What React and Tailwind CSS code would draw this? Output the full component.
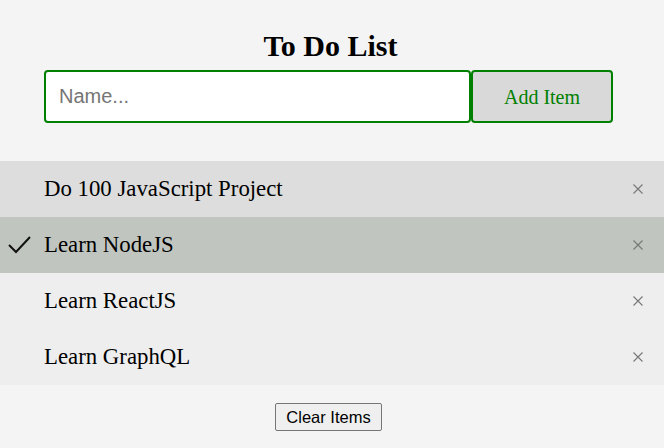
import { useState } from 'react';

const INITIAL = [
  { id: 1, text: 'Do 100 JavaScript Project', done: false },
  { id: 2, text: 'Learn NodeJS', done: true },
  { id: 3, text: 'Learn ReactJS', done: false },
  { id: 4, text: 'Learn GraphQL', done: false },
];

export default function App() {
  const [items, setItems] = useState(INITIAL);
  const [name, setName] = useState('');

  const add = () => {
    const t = name.trim();
    if (!t) return;
    setItems(list => [...list, { id: Date.now(), text: t, done: false }]);
    setName('');
  };

  const toggle = id => setItems(list => list.map(i => (i.id === id ? { ...i, done: !i.done } : i)));
  const remove = id => setItems(list => list.filter(i => i.id !== id));

  return (
    <div className="min-h-[448px] bg-[#f4f4f4] font-['Liberation_Serif',serif] text-black">
      <div className="pt-[30px] px-[44px] pb-[38px] bg-[#f4f4f4]">
        <h2 className="text-center text-[30px] leading-[32px] font-bold mb-[8px] pr-[3px]">To Do List</h2>
        <div className="flex">
          <input
            value={name}
            onChange={e => setName(e.target.value)}
            onKeyDown={e => { if (e.key === 'Enter') add(); }}
            placeholder="Name..."
            className="w-[427px] h-[53px] bg-white border-2 border-[#008000] rounded-[4px] px-[13px] text-[20px] font-['Liberation_Sans',sans-serif] outline-none placeholder:text-[#757575]"
          />
          <button
            onClick={add}
            className="w-[142px] h-[53px] bg-[#d9d9d9] border-2 border-[#008000] rounded-[4px] text-[20px] text-[#008000]"
          >
            Add Item
          </button>
        </div>
      </div>

      <ul>
        {items.map((item, idx) => (
          <li
            key={item.id}
            onClick={() => toggle(item.id)}
            className={`relative h-[56px] flex items-center pl-[44px] pr-[21px] text-[22.8px] cursor-pointer ${
              item.done ? 'bg-[#c0c6bf]' : idx === 0 ? 'bg-[#dddddd]' : 'bg-[#eeeeee]'
            }`}
          >
            {item.done && (
              <svg className="absolute left-[8px] top-[19px]" width="23" height="18" viewBox="0 0 23 18">
                <polyline points="1,9 8,16 22,1" fill="none" stroke="#111" strokeWidth="2" />
              </svg>
            )}
            <span className="flex-1">{item.text}</span>
            <button
              onClick={e => { e.stopPropagation(); remove(item.id); }}
              className="w-[10px] h-[10px] flex items-center justify-center"
            >
              <svg width="10" height="10" viewBox="0 0 10 10">
                <path d="M0.5 0.5 L9.5 9.5 M9.5 0.5 L0.5 9.5" stroke="#777" strokeWidth="1.1" />
              </svg>
            </button>
          </li>
        ))}
      </ul>

      <div className="flex justify-center pt-[18px] pr-[7px]">
        <button
          onClick={() => setItems([])}
          className="h-[28px] w-[107px] bg-[#efefef] border border-[#767676] rounded-[2px] text-[16.5px] font-['Liberation_Sans',sans-serif] text-black"
        >
          Clear Items
        </button>
      </div>
    </div>
  );
}
